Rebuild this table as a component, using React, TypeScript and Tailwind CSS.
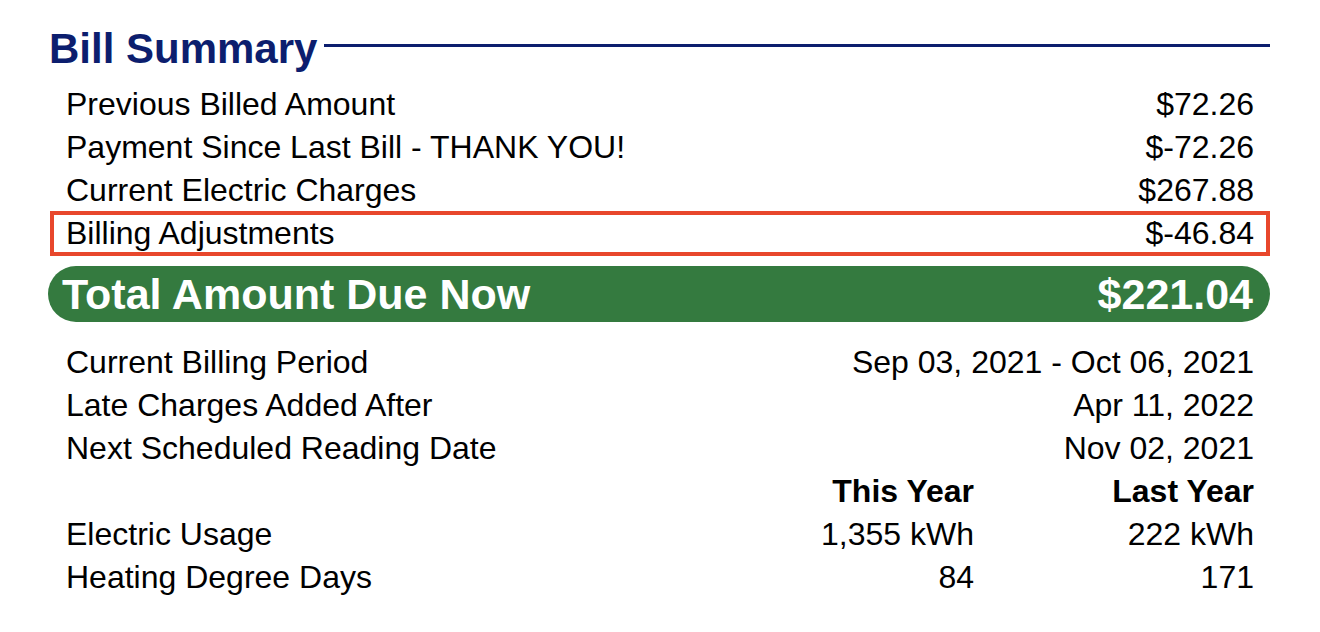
import React from 'react';

const summaryRows = [
    { label: 'Previous Billed Amount', value: '$72.26' },
    { label: 'Payment Since Last Bill - THANK YOU!', value: '$-72.26' },
    { label: 'Current Electric Charges', value: '$267.88' },
];

const periodRows = [
    { label: 'Current Billing Period', value: 'Sep 03, 2021 - Oct 06, 2021' },
    { label: 'Late Charges Added After', value: 'Apr 11, 2022' },
    { label: 'Next Scheduled Reading Date', value: 'Nov 02, 2021' },
];

const usageRows = [
    { label: 'Electric Usage', thisYear: '1,355 kWh', lastYear: '222 kWh' },
    { label: 'Heating Degree Days', thisYear: '84', lastYear: '171' },
];

export default function App() {
    return (
        <div className="w-[1320px] h-[632px] bg-white text-black font-['Liberation_Sans',Arial,sans-serif] pt-[28px] pl-[48px] pr-[50px]">
            {/* Heading with rule */}
            <div className="flex items-start">
                <h1 className="text-[42px] leading-[42px] font-bold text-[#0c1e6e] pl-[1px]">Bill Summary</h1>
                <div className="flex-1 h-[3px] bg-[#0c1e6e] mt-[16px] ml-[7px]" />
            </div>

            {/* Amounts */}
            <div className="mt-[13px] text-[32px] leading-[43px]">
                {summaryRows.map((row) => (
                    <div key={row.label} className="flex justify-between pl-[18px] pr-[16px]">
                        <span>{row.label}</span>
                        <span>{row.value}</span>
                    </div>
                ))}
                <div className="-mt-px ml-[2px] h-[45px] border-[4px] border-[#e8472c] flex justify-between items-center pl-[12px] pr-[12px] leading-[37px]">
                    <span>Billing Adjustments</span>
                    <span>$-46.84</span>
                </div>
            </div>

            {/* Total */}
            <div className="mt-[10px] h-[56px] rounded-full bg-[#347a3f] flex items-center justify-between pl-[14px] pr-[17px] text-white font-bold text-[43px] leading-none">
                <span>Total Amount Due Now</span>
                <span>$221.04</span>
            </div>

            {/* Billing period + usage */}
            <div className="mt-[19px] text-[32px] leading-[43px]">
                {periodRows.map((row) => (
                    <div key={row.label} className="flex justify-between pl-[18px] pr-[16px]">
                        <span>{row.label}</span>
                        <span>{row.value}</span>
                    </div>
                ))}
                <div className="flex pl-[18px] pr-[16px] font-bold">
                    <span className="flex-1" />
                    <span className="w-[240px] text-right">This Year</span>
                    <span className="w-[280px] text-right">Last Year</span>
                </div>
                {usageRows.map((row) => (
                    <div key={row.label} className="flex pl-[18px] pr-[16px]">
                        <span className="flex-1">{row.label}</span>
                        <span className="w-[240px] text-right">{row.thisYear}</span>
                        <span className="w-[280px] text-right">{row.lastYear}</span>
                    </div>
                ))}
            </div>
        </div>
    );
}
